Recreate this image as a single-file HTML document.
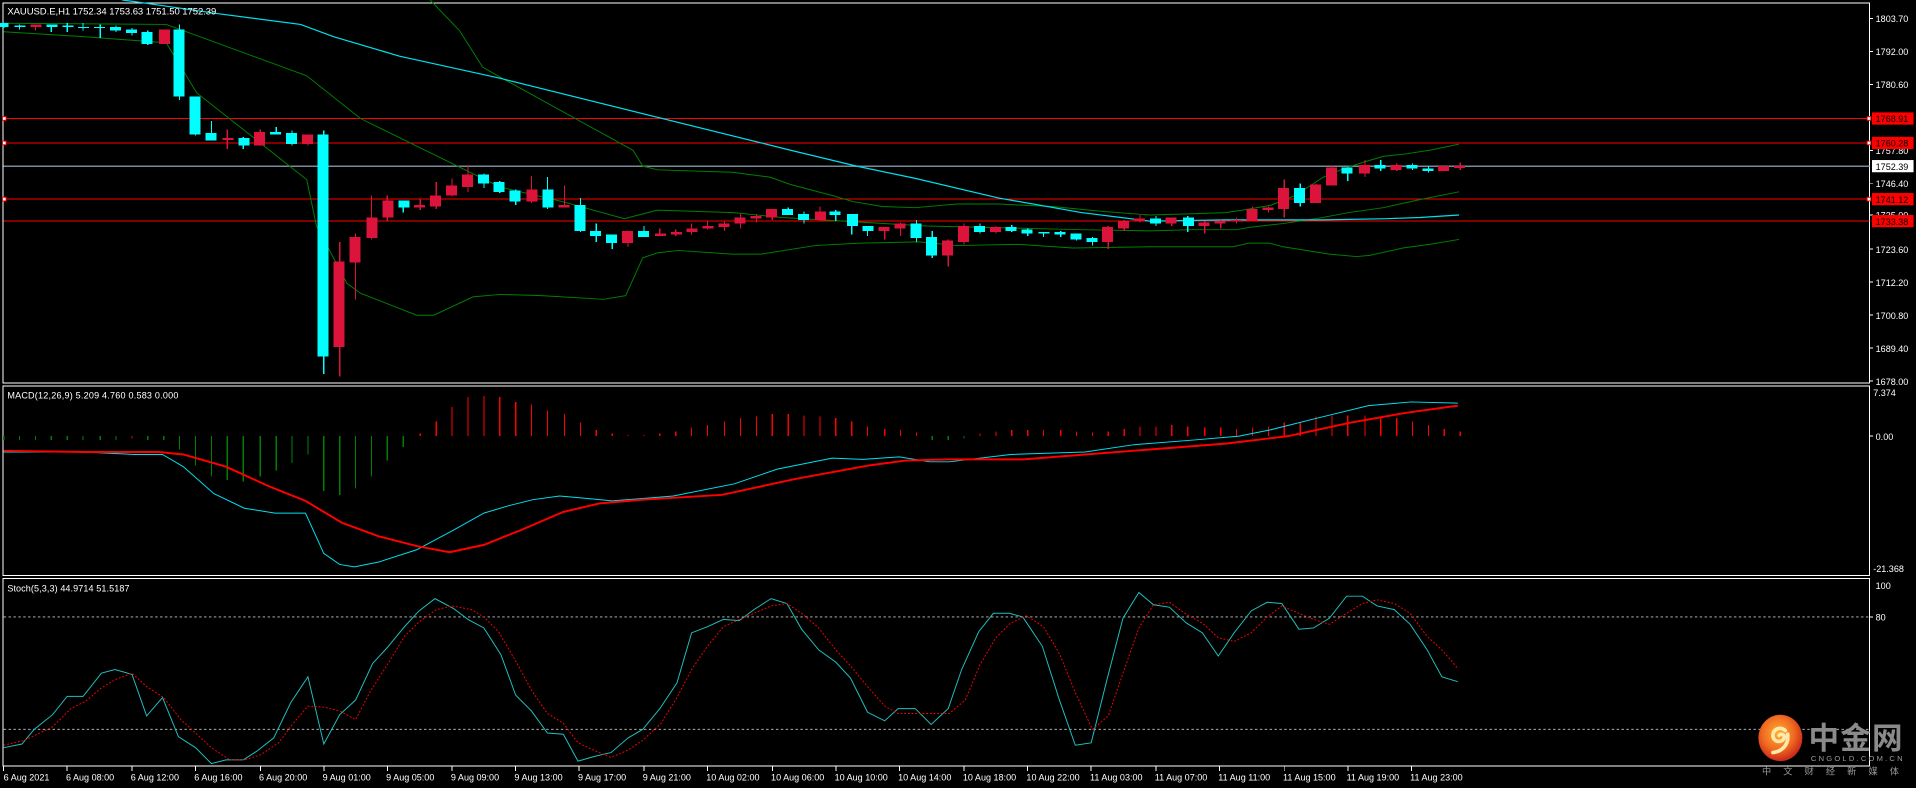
<!DOCTYPE html>
<html><head><meta charset="utf-8"><style>
html,body{margin:0;padding:0;background:#000;overflow:hidden}
svg{display:block}
text{font-family:"Liberation Sans","Noto Sans CJK SC",sans-serif;fill:#fff}
</style></head><body>
<svg width="1916" height="788" viewBox="0 0 1568 645" preserveAspectRatio="none" xmlns="http://www.w3.org/2000/svg">
<rect width="1568" height="645" fill="#000"/>
<!-- panel borders -->
<g fill="none" stroke="#fff" stroke-width="0.8" shape-rendering="crispEdges">
<rect x="2.5" y="2.5" width="1527.5" height="311"/>
<rect x="2.5" y="316" width="1527.5" height="155"/>
<rect x="2.5" y="473.5" width="1527.5" height="153.5"/>
</g>
<!-- level lines -->
<g stroke-width="1" shape-rendering="crispEdges">
<line x1="3" x2="1530" y1="97" y2="97" stroke="#ff0000"/>
<line x1="3" x2="1530" y1="117" y2="117" stroke="#ff0000" stroke-width="0.8"/>
<line x1="3" x2="1530" y1="136" y2="136" stroke="#778899"/>
<line x1="3" x2="1530" y1="163" y2="163" stroke="#ff0000"/>
<line x1="3" x2="1530" y1="181" y2="181" stroke="#ff0000" stroke-width="0.8"/>
</g>
<g fill="#fff" stroke="#ff0000" stroke-width="0.8">
<rect x="2" y="95.5" width="3" height="3"/><rect x="2" y="115.5" width="3" height="3"/><rect x="2" y="161.5" width="3" height="3"/>
<rect x="1528" y="95.5" width="3" height="3"/><rect x="1528" y="115.5" width="3" height="3"/><rect x="1528" y="161.5" width="3" height="3"/>
</g>
<!-- bands and MA -->
<g fill="none" stroke-width="0.8">
<polyline stroke="#008000" points="352,0 376,25 395,55 409,63 518,123 526,136 538,139 599,141 630,145 647,151 681,160 698,165 722,169 749,170 783,167 817,167 861,169 902,173 941,176 976,175 1003,174 1017,172 1040,168 1060,160 1083,145 1100,138 1115,133 1132,128 1150,126 1170,123 1194,118"/>
<polyline stroke="#008000" points="3,19 136,20 147,24 251,62 295,97 409,153 460,165 511,179 538,172 600,174 640,178 758,185 884,188 941,189 976,188 1012,188 1023,186 1050,183 1077,179 1104,174 1132,170 1159,164 1194,157"/>
<polyline stroke="#008000" points="3,26 68,30 136,35 161,76 251,147 259,185 284,232 295,240 341,258 355,258 387,243 409,241 443,242 494,245 512,242 526,211 538,207 555,205 599,208 623,208 667,201 704,199 752,198 783,201 834,200 878,203 941,202 1009,202 1022,199 1039,199 1050,202 1088,208 1110,210 1121,209 1148,203 1170,200 1194,196"/>
<polyline stroke="#00e0f0" stroke-width="1" points="100,0 115,2 177,11 246,20 273,30 327,46 409,64 647,123 701,136 749,146 817,162 885,174 941,181 1003,180 1083,180 1135,179 1162,178 1194,176"/>
</g>
<!-- candles cyan -->
<g stroke="#00ffff" stroke-width="1" shape-rendering="crispEdges"><path d="M3 19V23M16 20V24M42 20V26M55 19V26M68 19V25M82 20V31M95 21V26M108 23V29M121 25V37M147 20V82M160 79V111M173 99V115M199 112V122M226 104V110M239 107V119M265 107V306M330 164V174M396 142V154M409 148V158M422 155V168M448 145V171M475 162V190M488 183V198M501 192V204M527 185V194M645 170V176M658 173V183M684 172V181M697 175V192M710 185V193M750 180V198M763 189V211M802 183V191M828 184V190M841 187V193M854 190V194M868 189V194M881 191V197M894 194V201M946 177V185M972 177V190M1064 150V169M1103 137V148M1130 131V140M1156 134V139M1169 136V141"/></g>
<g fill="#00ffff" shape-rendering="crispEdges">
<rect x="0" y="19" width="7" height="3"/><rect x="12" y="21" width="9" height="1"/><rect x="38" y="20" width="9" height="2"/><rect x="51" y="21" width="9" height="1"/><rect x="64" y="22" width="9" height="1"/><rect x="77" y="22" width="9" height="1"/><rect x="90" y="22" width="9" height="3"/><rect x="103" y="24" width="9" height="3"/><rect x="116" y="26" width="9" height="10"/><rect x="142" y="24" width="9" height="55"/><rect x="155" y="79" width="9" height="31"/><rect x="168" y="109" width="9" height="6"/><rect x="195" y="113" width="9" height="6"/><rect x="221" y="108" width="9" height="2"/><rect x="234" y="109" width="9" height="9"/><rect x="260" y="110" width="9" height="182"/><rect x="326" y="164" width="9" height="6"/><rect x="391" y="143" width="9" height="7"/><rect x="404" y="149" width="9" height="8"/><rect x="417" y="156" width="9" height="9"/><rect x="444" y="155" width="9" height="15"/><rect x="470" y="168" width="9" height="21"/><rect x="483" y="189" width="9" height="4"/><rect x="496" y="192" width="9" height="7"/><rect x="522" y="189" width="9" height="5"/><rect x="640" y="171" width="9" height="5"/><rect x="653" y="175" width="9" height="5"/><rect x="679" y="173" width="9" height="3"/><rect x="693" y="175" width="9" height="10"/><rect x="706" y="185" width="9" height="4"/><rect x="745" y="183" width="9" height="12"/><rect x="758" y="194" width="9" height="15"/><rect x="797" y="185" width="9" height="5"/><rect x="823" y="186" width="9" height="3"/><rect x="836" y="188" width="9" height="3"/><rect x="850" y="190" width="9" height="1"/><rect x="863" y="190" width="9" height="2"/><rect x="876" y="191" width="9" height="5"/><rect x="889" y="195" width="9" height="3"/><rect x="941" y="179" width="9" height="4"/><rect x="968" y="178" width="9" height="7"/><rect x="1059" y="154" width="9" height="12"/><rect x="1098" y="137" width="9" height="5"/><rect x="1125" y="135" width="9" height="3"/><rect x="1151" y="135" width="9" height="3"/><rect x="1164" y="138" width="9" height="2"/>
</g>
<!-- candles red -->
<g stroke="#dc143c" stroke-width="1" shape-rendering="crispEdges"><path d="M29 20V25M186 106V122M213 106V119M252 110V119M278 198V308M291 191V245M304 160V196M317 160V181M344 163V172M357 149V171M370 146V161M383 135V157M435 144V166M462 152V170M514 189V202M540 187V193M553 188V193M566 183V192M579 181V188M593 181V189M606 175V187M619 175V182M632 171V180M671 169V181M724 186V196M737 182V193M776 196V218M789 183V200M815 185V191M907 185V204M920 180V189M933 176V182M959 178V185M986 181V191M999 180V187M1012 178V183M1025 169V181M1038 169V174M1051 147V178M1077 150V166M1090 136V152M1117 131V145M1143 134V140M1182 136V140M1195 133V139"/></g>
<g fill="#dc143c" shape-rendering="crispEdges">
<rect x="25" y="20" width="9" height="2"/><rect x="130" y="24" width="9" height="12"/><rect x="182" y="113" width="9" height="1.5"/><rect x="208" y="108" width="9" height="11"/><rect x="247" y="110" width="9" height="8"/><rect x="273" y="214" width="9" height="70"/><rect x="286" y="194" width="9" height="21"/><rect x="300" y="178" width="9" height="17"/><rect x="313" y="164" width="9" height="14"/><rect x="339" y="168" width="9" height="2"/><rect x="352" y="160" width="9" height="9"/><rect x="365" y="152" width="9" height="8"/><rect x="378" y="143" width="9" height="10"/><rect x="431" y="155" width="9" height="10"/><rect x="457" y="168" width="9" height="2"/><rect x="509" y="189" width="9" height="10"/><rect x="536" y="191" width="9" height="2"/><rect x="549" y="190" width="9" height="2"/><rect x="562" y="187" width="9" height="3"/><rect x="575" y="185" width="9" height="2"/><rect x="588" y="183" width="9" height="3"/><rect x="601" y="178" width="9" height="5"/><rect x="614" y="177" width="9" height="2"/><rect x="627" y="171" width="9" height="7"/><rect x="667" y="173" width="9" height="7"/><rect x="719" y="186" width="9" height="3"/><rect x="732" y="183" width="9" height="4"/><rect x="771" y="197" width="9" height="12"/><rect x="784" y="185" width="9" height="13"/><rect x="810" y="186" width="9" height="4"/><rect x="902" y="186" width="9" height="12"/><rect x="915" y="181" width="9" height="6"/><rect x="928" y="179" width="9" height="2"/><rect x="954" y="178" width="9" height="5"/><rect x="981" y="182" width="9" height="3"/><rect x="994" y="181" width="9" height="2"/><rect x="1007" y="180" width="9" height="1.5"/><rect x="1020" y="171" width="9" height="10"/><rect x="1033" y="170" width="9" height="2"/><rect x="1046" y="154" width="9" height="17"/><rect x="1072" y="151" width="9" height="15"/><rect x="1085" y="137" width="9" height="15"/><rect x="1112" y="135" width="9" height="7"/><rect x="1138" y="135" width="9" height="4"/><rect x="1177" y="136" width="9" height="4"/><rect x="1190" y="136" width="9" height="1.5"/>
</g>
<!-- header -->
<text x="6" y="12" font-size="7.8" textLength="171">XAUUSD.E,H1  1752.34 1753.63 1751.50 1752.39</text>
<!-- price axis -->
<g stroke="#fff" stroke-width="0.8" shape-rendering="crispEdges"><path d="M1530 15H1533M1530 42H1533M1530 69H1533M1530 123H1533M1530 150H1533M1530 176H1533M1530 204H1533M1530 231H1533M1530 258H1533M1530 285H1533M1530 312H1533M1530 357H1533M1530 505H1533"/></g>
<g font-size="7.4">
<text x="1535" y="18">1803.70</text><text x="1535" y="45">1792.00</text><text x="1535" y="72">1780.60</text>
<text x="1535" y="153">1746.40</text><text x="1535" y="207">1723.60</text><text x="1535" y="234">1712.20</text>
<text x="1535" y="261">1700.80</text><text x="1535" y="288">1689.40</text><text x="1535" y="315">1678.00</text>
<text x="1535" y="126">1757.80</text><text x="1535" y="179">1735.00</text>
</g>
<g font-size="7.4">
<rect x="1532" y="92" width="34" height="10" fill="#ff0000"/><text x="1535" y="100" style="fill:#000">1768.91</text>
<rect x="1532" y="112" width="34" height="10" fill="#ff0000"/><text x="1535" y="120" style="fill:#000">1760.28</text>
<rect x="1532" y="131" width="34" height="10" fill="#fff"/><text x="1535" y="139" style="fill:#000">1752.39</text>
<rect x="1532" y="158" width="34" height="10" fill="#ff0000"/><text x="1535" y="166" style="fill:#000">1741.12</text>
<rect x="1532" y="176" width="34" height="10" fill="#ff0000"/><text x="1535" y="184" style="fill:#000">1733.38</text>
</g>
<!-- MACD -->
<text x="6" y="326" font-size="7.4" textLength="140">MACD(12,26,9) 5.209 4.760 0.583 0.000</text>
<g stroke-width="1" shape-rendering="crispEdges">
<path stroke="#008000" d="M3 357V360M16 357V360M29 357V360M42 357V360M55 357V360M68 357V360M82 357V360M95 357V360M121 357V360M134 357V360M147 357V368M160 357V381M173 357V390M186 357V393M199 357V394M213 357V390M226 357V385M239 357V379M252 357V372M265 357V402M278 357V405M291 357V400M304 357V390M317 357V377M330 357V366M763 357V360M776 357V360M789 357V359"/>
<path stroke="#ff0000" d="M108 357V359M344 355V357M357 345V357M370 333V357M383 325V357M396 324V357M409 325V357M422 329V357M435 331V357M448 336V357M462 339V357M475 346V357M488 352V357M501 355V357M514 356V357M527 356V357M540 355V357M553 353V357M566 350V357M579 348V357M593 345V357M606 342V357M619 341V357M632 339V357M645 339V357M658 340V357M671 341V357M684 342V357M697 345V357M710 349V357M724 351V357M737 352V357M750 354V357M802 355V357M815 353V357M828 352V357M841 352V357M854 352V357M868 352V357M881 353V357M894 354V357M907 353V357M920 351V357M933 349V357M946 349V357M959 348V357M972 349V357M986 350V357M999 350V357M1012 351V357M1025 350V357M1038 349V357M1051 346V357M1064 346V357M1077 341V357M1090 340V357M1103 340V357M1117 340V357M1130 341V357M1143 342V357M1156 345V357M1169 348V357M1182 351V357M1195 353V357"/>
</g>
<polyline fill="none" stroke="#00e0f0" stroke-width="0.8" points="3,370 68,370 110,372 133,372 150,382 175,404 200,416 225,420 250,420 265,453 278,462 290,464 310,460 341,450 371,434 396,420 416,414 436,409 458,406 481,408 501,410 551,406 601,396 636,384 681,375 706,376 736,374 761,378 777,378 827,372 888,370 928,364 979,360 1014,357 1039,352 1079,342 1120,332 1155,329 1193,330"/>
<polyline fill="none" stroke="#ff0000" stroke-width="1.6" points="3,369 70,370 130,370 150,372 185,382 220,398 250,410 280,428 310,439 341,447 368,452 396,446 426,434 461,419 491,412 526,409 591,405 651,392 711,381 741,377 777,376 838,376 888,372 953,367 1004,363 1054,357 1105,346 1150,338 1193,332"/>
<g font-size="7.4"><text x="1533" y="324">7.374</text><text x="1535" y="360">0.00</text><text x="1533" y="468">-21.368</text></g>
<!-- Stoch -->
<text x="6" y="484" font-size="7.4" textLength="100">Stoch(5,3,3) 44.9714 51.5187</text>
<g stroke="#c8c8c8" stroke-width="0.7" stroke-dasharray="2,2"><line x1="3" x2="1530" y1="505" y2="505"/><line x1="3" x2="1530" y1="597" y2="597"/></g>
<polyline fill="none" stroke="#20c0c0" stroke-width="0.8" points="3,612 18,609 28,597 43,585 55,570 68,570 83,551 94,548 108,552 120,586 133,571 146,603 160,612 173,625 185,622 199,622 210,615 224,604 238,575 252,554 265,609 278,585 291,573 305,543 317,530 331,513 343,500 356,490 371,498 383,507 396,514 410,536 422,569 435,582 448,600 461,601 473,623 487,619 500,616 514,604 526,597 540,580 554,559 566,518 579,513 592,507 605,508 617,499 631,490 644,494 656,515 670,532 684,542 696,555 710,583 724,590 735,580 749,580 762,593 776,580 787,548 801,517 813,502 826,502 837,505 853,529 867,573 880,610 893,608 906,556 919,506 932,485 944,495 957,497 971,510 984,518 997,537 1010,518 1024,500 1037,493 1049,494 1063,515 1075,514 1088,506 1102,488 1115,488 1127,496 1141,499 1154,511 1168,532 1180,554 1193,558"/>
<polyline fill="none" stroke="#ff0000" stroke-width="0.8" stroke-dasharray="1.5,1.5" points="3,610 20,606 43,595 58,580 70,574 83,563 95,556 108,551 120,562 134,571 148,589 160,600 173,612 188,622 200,622 213,618 228,608 240,592 252,578 266,579 278,582 291,589 303,566 317,544 331,521 343,509 357,499 370,496 386,499 396,505 408,517 422,541 435,565 448,584 461,592 473,608 488,615 500,620 514,614 526,606 541,592 554,571 566,548 579,529 592,513 605,507 617,502 631,496 644,494 656,502 670,514 684,532 696,545 710,562 724,578 735,584 749,584 762,584 777,584 790,573 802,544 815,522 827,510 840,504 854,513 867,535 880,567 894,597 907,586 919,551 932,514 944,495 957,493 971,503 984,510 997,522 1010,525 1024,518 1037,505 1049,496 1063,502 1075,507 1088,511 1102,502 1115,494 1127,491 1141,494 1154,502 1168,521 1180,532 1193,547"/>
<g font-size="7.4"><text x="1535" y="482">100</text><text x="1535" y="508">80</text></g>
<!-- time axis -->
<g stroke="#fff" stroke-width="0.8" shape-rendering="crispEdges"><path d="M3 627V631M55 627V631M108 627V631M160 627V631M213 627V631M265 627V631M317 627V631M370 627V631M422 627V631M474 627V631M527 627V631M579 627V631M632 627V631M684 627V631M736 627V631M789 627V631M841 627V631M893 627V631M946 627V631M998 627V631M1051 627V631M1103 627V631M1155 627V631"/></g>
<g font-size="7.4">
<text x="3" y="639">6 Aug 2021</text><text x="54" y="639">6 Aug 08:00</text><text x="107" y="639">6 Aug 12:00</text><text x="159" y="639">6 Aug 16:00</text><text x="212" y="639">6 Aug 20:00</text><text x="264" y="639">9 Aug 01:00</text><text x="316" y="639">9 Aug 05:00</text><text x="369" y="639">9 Aug 09:00</text><text x="421" y="639">9 Aug 13:00</text><text x="473" y="639">9 Aug 17:00</text><text x="526" y="639">9 Aug 21:00</text><text x="578" y="639">10 Aug 02:00</text><text x="631" y="639">10 Aug 06:00</text><text x="683" y="639">10 Aug 10:00</text><text x="735" y="639">10 Aug 14:00</text><text x="788" y="639">10 Aug 18:00</text><text x="840" y="639">10 Aug 22:00</text><text x="892" y="639">11 Aug 03:00</text><text x="945" y="639">11 Aug 07:00</text><text x="997" y="639">11 Aug 11:00</text><text x="1050" y="639">11 Aug 15:00</text><text x="1102" y="639">11 Aug 19:00</text><text x="1154" y="639">11 Aug 23:00</text>
</g>
<!-- logo -->
<defs><radialGradient id="lg" cx="0.45" cy="0.4" r="0.6"><stop offset="0" stop-color="#ffb030"/><stop offset="0.6" stop-color="#f06a20"/><stop offset="1" stop-color="#c8281a"/></radialGradient></defs>
<ellipse cx="1457" cy="604" rx="18" ry="19" fill="url(#lg)"/>
<path d="M1461 598c-4-4-11-1-10 5c1 5 8 5 9 1c1-3-3-4-4-2M1463 601c1 8-4 14-12 15" fill="none" stroke="#ffe9a8" stroke-width="3" stroke-linecap="round"/>
<text x="1480" y="613" font-size="25" font-weight="bold" style="fill:#8a8a8a;font-family:'Noto Sans CJK SC',sans-serif" textLength="77">中金网</text>
<text x="1482" y="623" font-size="6.2" style="fill:#9a9a9a" textLength="75">CNGOLD.COM.CN</text>
<text x="1442" y="634" font-size="7.5" style="fill:#9a9a9a;font-family:'Noto Sans CJK SC',sans-serif" textLength="112">中文财经新媒体</text>
</svg>
</body></html>
